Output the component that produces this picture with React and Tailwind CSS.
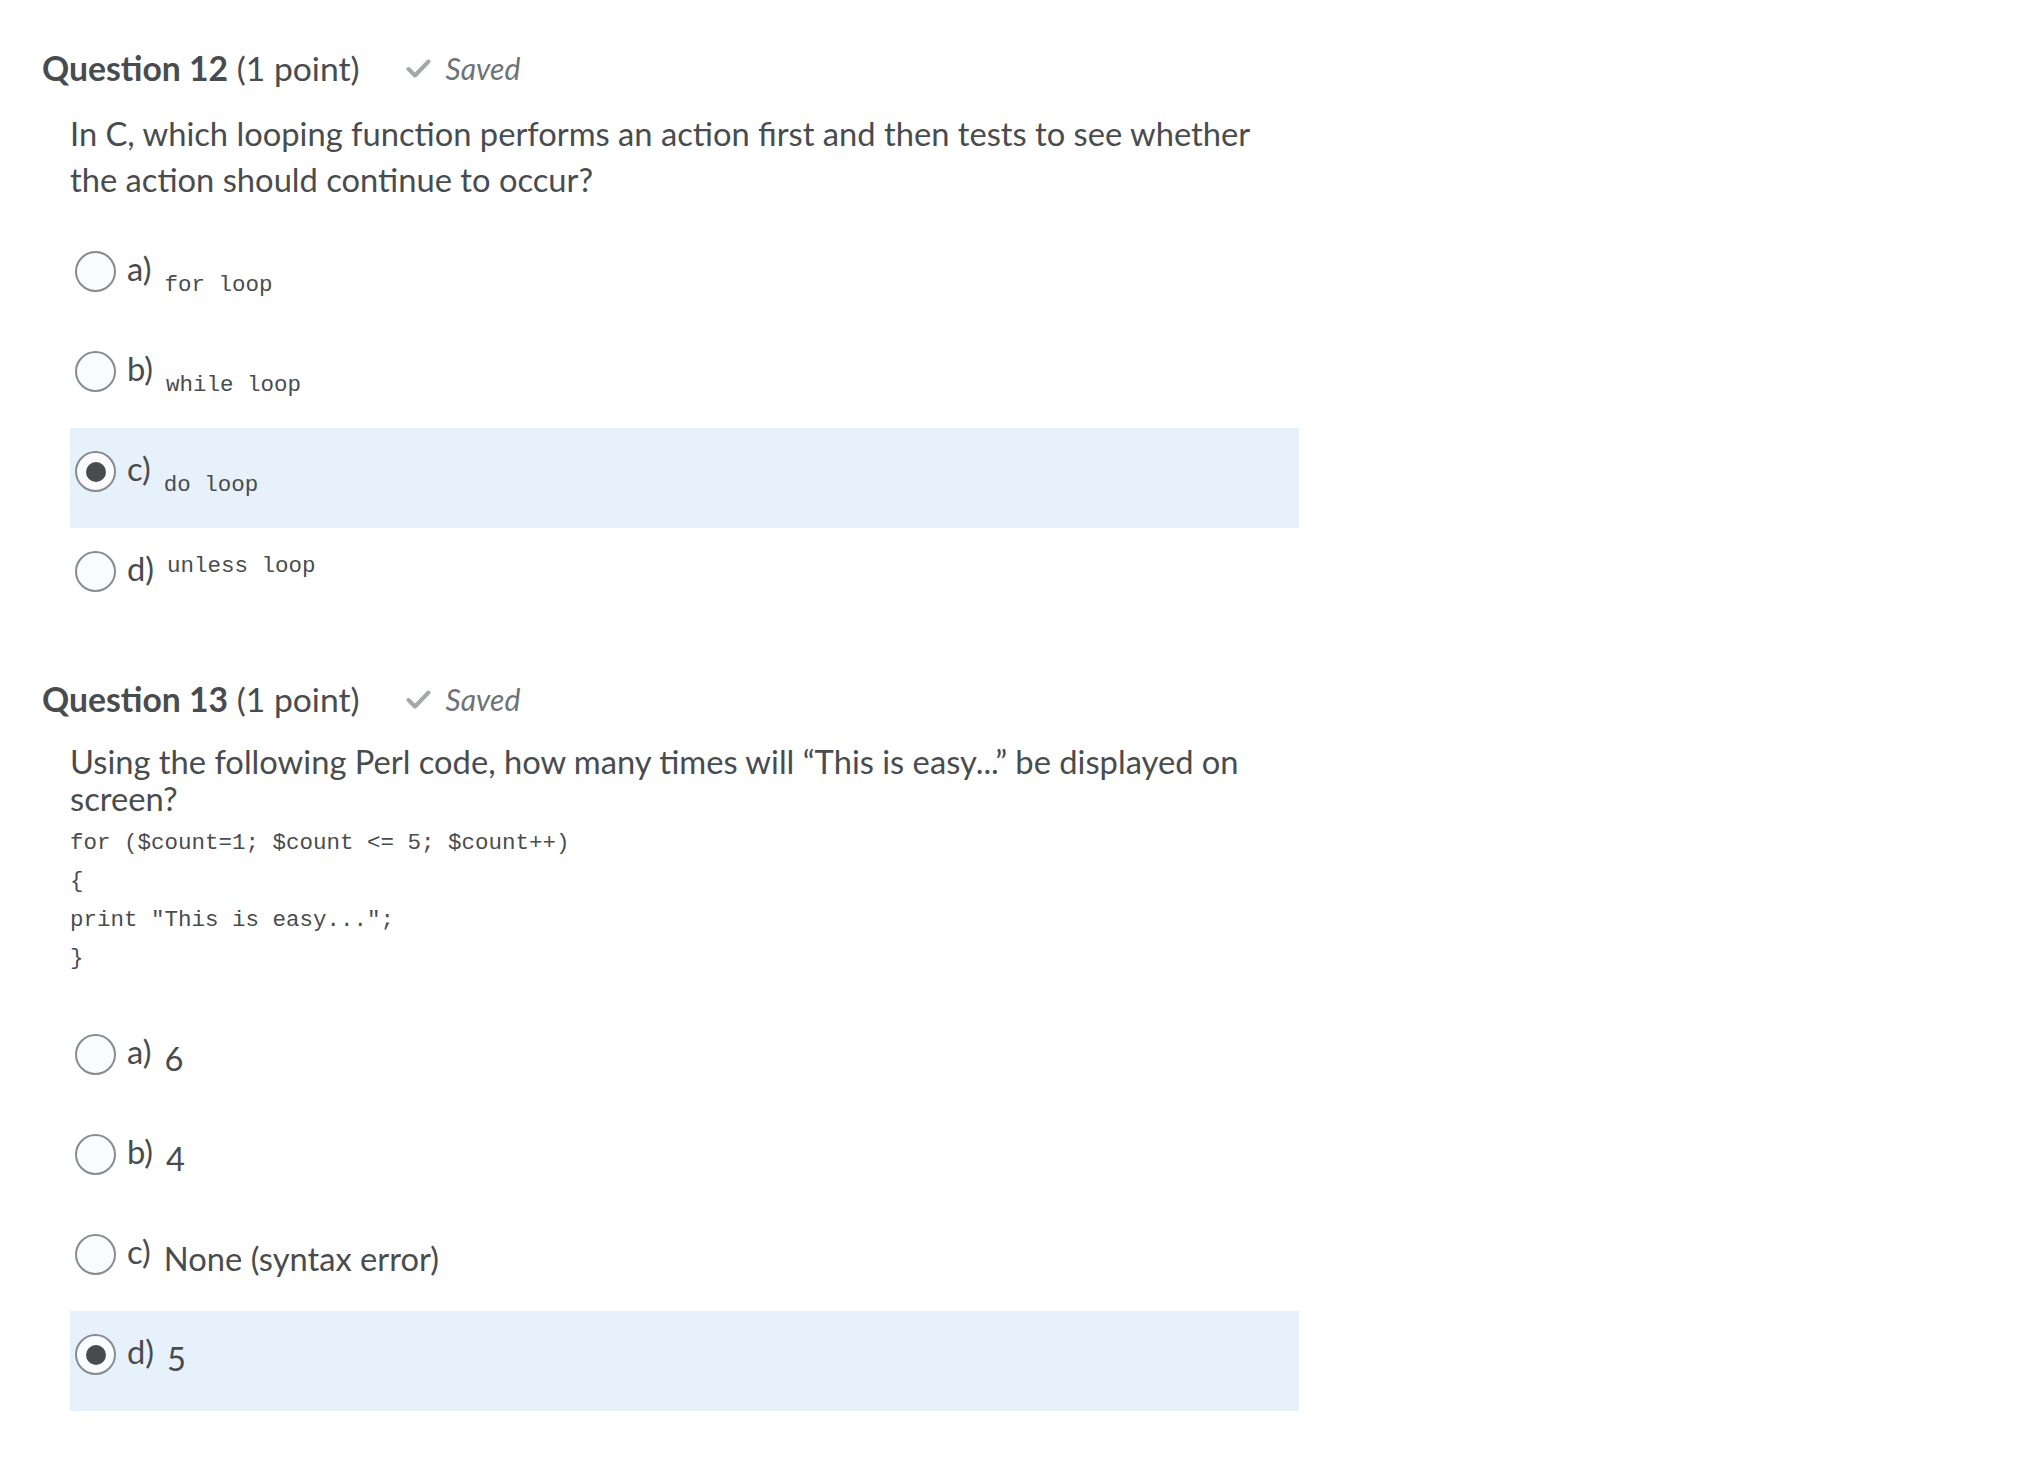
import React from "react";

const lato = { fontFamily: "Lato, 'Open Sans', sans-serif" };

function Check() {
  return (
    <svg width="25" height="19" viewBox="0 0 25 19" className="shrink-0">
      <polyline points="2.5,10 9,16.5 22.5,2.5" fill="none" stroke="#a3a8ab" strokeWidth="4" strokeLinecap="round" strokeLinejoin="round" />
    </svg>
  );
}

function Header({ n }) {
  return (
    <div className="flex items-center h-[41px] text-[#494c4e]">
      <span className="text-[33.7px] leading-[41px] whitespace-nowrap">
        <span className="font-bold">Question {n}</span> (1 point)
      </span>
      <span className="flex items-center ml-[46px] gap-[15px]">
        <Check />
        <span className="italic text-[30px] text-[#6e7376]">Saved</span>
      </span>
    </div>
  );
}

function Radio({ checked }) {
  return (
    <div className="mt-[23px] ml-[5px] w-[41px] h-[41px] shrink-0 rounded-full border-2 border-[#868c8f] bg-[#f9fbfe] flex items-center justify-center">
      {checked && <div className="w-[20px] h-[20px] rounded-full bg-[#494c4e]" />}
    </div>
  );
}

function Option({ letter, checked, children, contentClass }) {
  return (
    <div className={"flex items-start h-[100px] w-[1229px] " + (checked ? "bg-[#e7f1fc]" : "")}>
      <Radio checked={checked} />
      <div className="flex items-start ml-[11px] gap-[13px]">
        <span className="text-[32.7px] leading-[40px] mt-[21px] text-[#494c4e]">{letter})</span>
        <span className={contentClass}>{children}</span>
      </div>
    </div>
  );
}

const codeFont = { fontFamily: "'Liberation Mono', 'Courier New', monospace" };

function Code({ children }) {
  return (
    <span style={codeFont} className="text-[22.5px] leading-[26px] text-[#494c4e] whitespace-pre">
      {children}
    </span>
  );
}

export default function App() {
  return (
    <div style={lato} className="w-[2039px] h-[1458px] bg-white text-[#494c4e] pl-[42px] pt-[48px] overflow-hidden">
      {/* Question 12 */}
      <Header n={12} />
      <div className="pl-[28px]">
        <p className="mt-[22px] text-[32.7px] leading-[46px] text-[#494c4e] whitespace-nowrap">
          In C, which looping function performs an action first and then tests to see whether
          <br />
          the action should continue to occur?
        </p>
        <div className="mt-[25px] flex flex-col">
          <Option letter="a" contentClass="mt-[44px]"><Code>for loop</Code></Option>
          <Option letter="b" contentClass="mt-[44px]"><Code>while loop</Code></Option>
          <Option letter="c" checked contentClass="mt-[44px]"><Code>do loop</Code></Option>
          <Option letter="d" contentClass="mt-[25px]"><Code>unless loop</Code></Option>
        </div>
      </div>

      {/* Question 13 */}
      <div className="mt-[51px]">
        <Header n={13} />
      </div>
      <div className="pl-[28px]">
        <p className="mt-[23px] text-[32.7px] leading-[37px] text-[#494c4e] whitespace-nowrap">
          Using the following Perl code, how many times will “This is easy...” be displayed on
          <br />
          screen?
        </p>
        <div style={codeFont} className="mt-[7px] text-[22.5px] leading-[38.3px] text-[#494c4e] whitespace-pre">
          <div>{"for ($count=1; $count <= 5; $count++)"}</div>
          <div>{"{"}</div>
          <div>{'print "This is easy...";'}</div>
          <div>{"}"}</div>
        </div>
        <div className="mt-[34px] flex flex-col">
          <Option letter="a" contentClass="mt-[28px] text-[32.7px] leading-[40px]">6</Option>
          <Option letter="b" contentClass="mt-[28px] text-[32.7px] leading-[40px]">4</Option>
          <Option letter="c" contentClass="mt-[28px] text-[32.7px] leading-[40px]">None (syntax error)</Option>
          <Option letter="d" checked contentClass="mt-[28px] text-[32.7px] leading-[40px]">5</Option>
        </div>
      </div>
    </div>
  );
}
